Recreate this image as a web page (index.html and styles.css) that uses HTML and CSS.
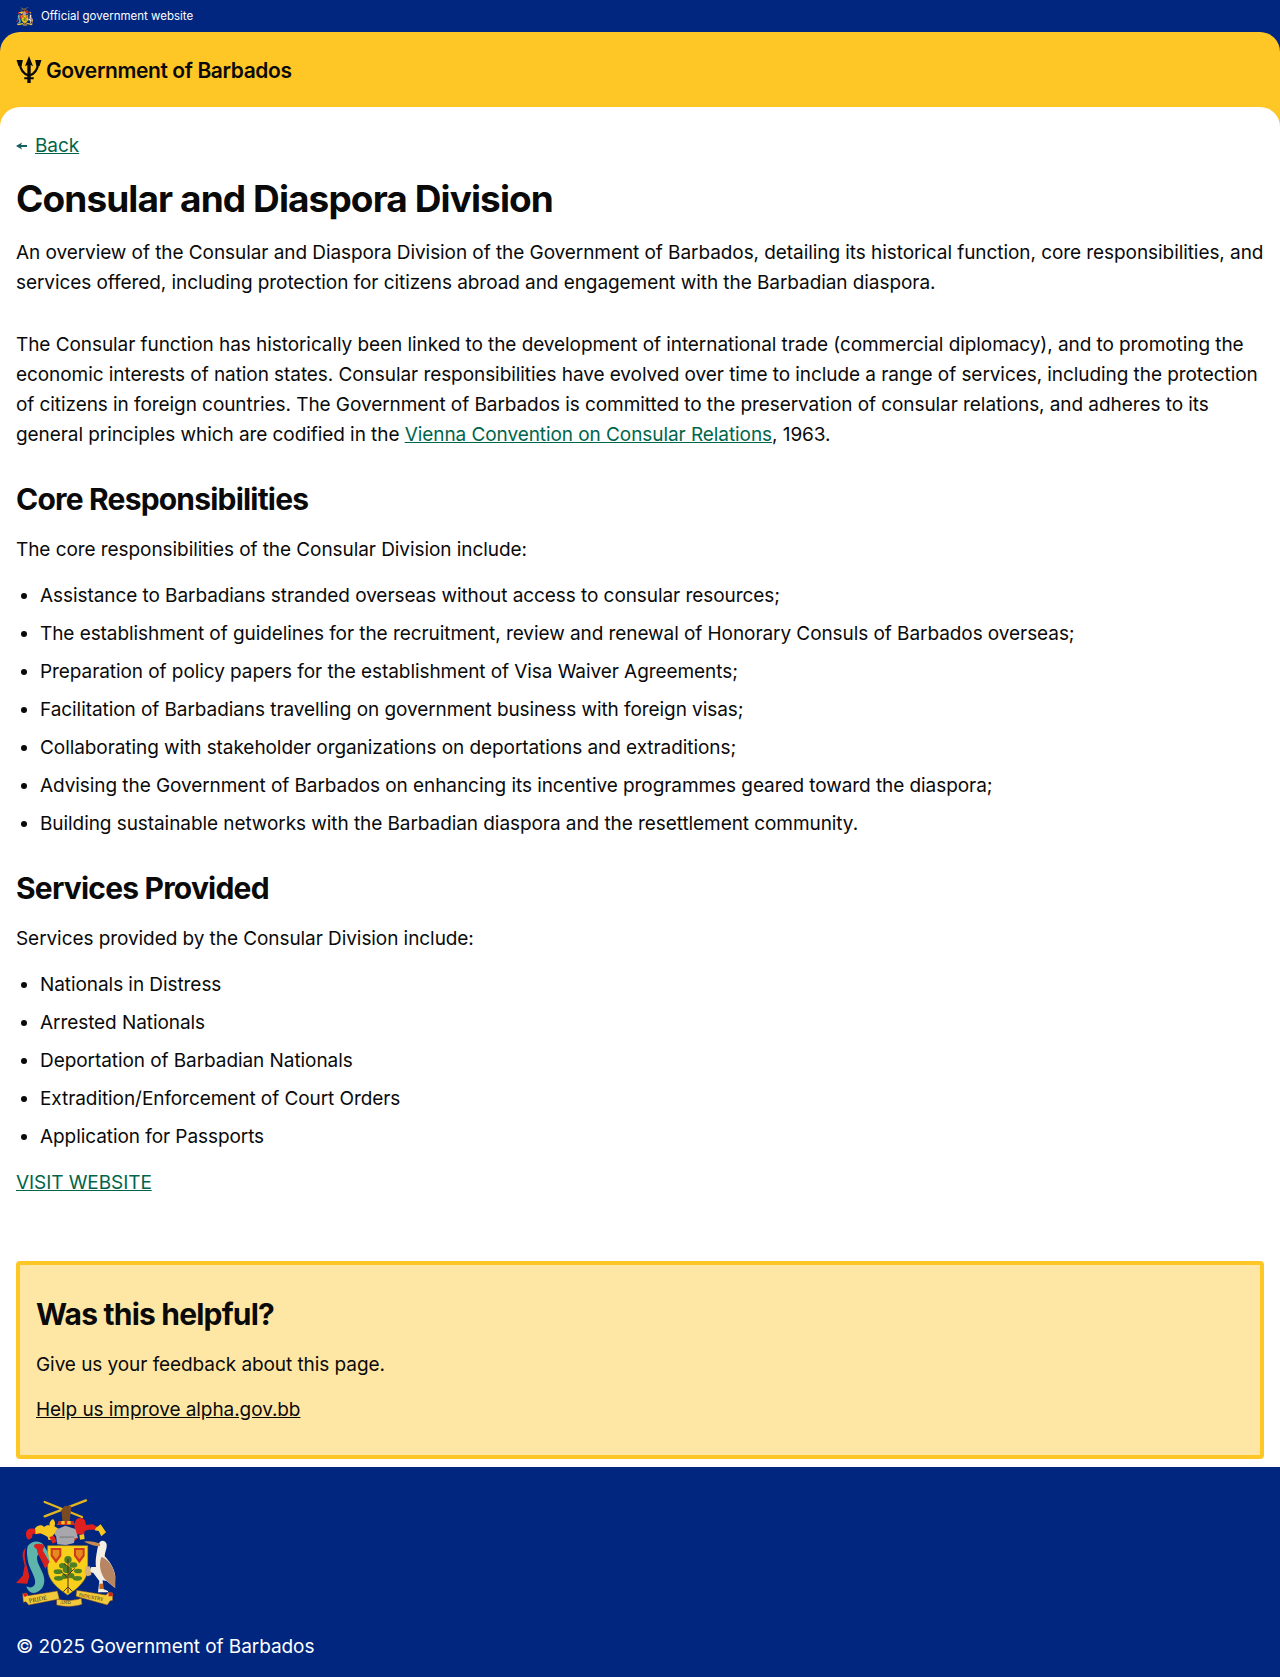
FILE: index.html
```html
<!DOCTYPE html>
<html lang="en">
<head>
<meta charset="utf-8">
<title>Consular and Diaspora Division</title>
<link rel="stylesheet" href="styles.css">
</head>
<body>
<svg class="defs" width="0" height="0" aria-hidden="true">
  <symbol id="arms" viewBox="50 55 300 330">
    <g fill="none" stroke="#e3b520" stroke-width="7" stroke-linecap="round">
      <path d="M136 67 L248 112"/><path d="M260 62 L136 110"/>
    </g>
    <path d="M186 92 L196 78 L216 80 L214 100 L210 132 L190 132Z" fill="#7a4a25"/>
    <path d="M178 124h44l6 12h-56Z" fill="#c8321e"/>
    <path d="M186 124h10v10h-10ZM204 124h10v10h-10Z" fill="#f0c41c"/>
    <!-- left mantling -->
    <path d="M80 162c0-12 12-18 28-14l20 6-6 10-22-2-2 12-10 6c-6-4-8-10-8-18Z" fill="#e0201f"/>
    <path d="M107 146c8-10 20-12 28-4 4-6 12-6 16-4-2-8 2-16 10-20 6 6 8 14 4 22l14 8-2 12-12 2-6 8c2 4 0 8-2 12l-10-2-2-8-10-6-14-6-12 4-2-18Z" fill="#f7c81e"/>
    <path d="M150 172l14-4 8 18-12 6Z" fill="#e0201f"/>
    <!-- right mantling -->
    <path d="M232 118c10-6 24-4 26 8l2 10 20-2 14 8-4 8-22 0-12 4-2 12-14-2-10 2-4-20c-2-10 2-24 6-28Z" fill="#e0201f"/>
    <path d="M216 168l12-6 8 14-12 8Z" fill="#e0201f"/>
    <path d="M290 144l14-10 16 24-14 12-8-16-12-2Z" fill="#f7c81e"/>
    <path d="M240 166l14-2 2 14-14 2Z" fill="#f7c81e"/>
    <!-- helmet -->
    <path d="M170 150l28-12 30 10 8 26-10 2-2 14-24 6-26-2-4-26-4-2Z" fill="#a8a8ac"/>
    <path d="M180 170l44 0 0 4-42 2Z" fill="#8a8a8f"/>
    <!-- shield -->
    <path d="M145 198h120v68c0 36-30 60-60 80-30-20-60-44-60-80Z" fill="#f8cf1a" stroke="#b8931a" stroke-width="1.500"/>
    <path d="M154 205h32v24l-16 22-16-22Z" fill="#cf3a1c"/>
    <path d="M224 205h32v24l-16 22-16-22Z" fill="#cf3a1c"/>
    <path d="M160 211h20v15l-10 13-10-13Z" fill="#e58a1c"/>
    <path d="M230 211h20v15l-10 13-10-13Z" fill="#e58a1c"/>
    <!-- tree -->
    <g fill="#4f7f24">
      <ellipse cx="206" cy="240" rx="11" ry="11"/>
      <ellipse cx="190" cy="258" rx="11" ry="8"/>
      <ellipse cx="222" cy="256" rx="12" ry="8"/>
      <ellipse cx="176" cy="276" rx="13" ry="7"/>
      <ellipse cx="236" cy="274" rx="12" ry="7"/>
      <ellipse cx="204" cy="270" rx="14" ry="10"/>
      <ellipse cx="178" cy="296" rx="14" ry="7"/>
      <ellipse cx="234" cy="296" rx="14" ry="7"/>
      <ellipse cx="196" cy="290" rx="9" ry="8"/>
      <ellipse cx="216" cy="288" rx="9" ry="8"/>
    </g>
    <g fill="none" stroke="#4e2f14" stroke-width="3">
      <path d="M206 238v86"/><path d="M206 296l-20-20M206 286l20-20M206 262l-12-10M206 322l-14 14M206 322l14 14M206 322v18"/>
    </g>
    <!-- dolphin -->
    <path d="M85 200c10-16 34-20 46-6l14 22 6 30-12 18-12-30c-6-12-14-12-14 2 2 24 22 42 22 66 0 20-12 36-32 38-12 0-18-8-22-20 10 6 22 4 26-8 4-16-14-40-20-62-4-20-6-36-2-50Z" fill="#5db5ab"/>
    <path d="M106 194c12-4 24-2 30 4l-6 14 6 10 14 24-12 22-12-26-10-18-4-16-8-6ZM80 204c-6 16-4 38 4 60l6 26-6 22-34-2 20-22 6-30-6-26c-2-12 4-24 10-28Z" fill="#d8201f"/>
    <!-- pelican -->
    <path d="M296 200c2-20 22-22 26-6 2 12-6 24-6 36 14 14 28 34 32 60l-2 34-24-20-12-2 2 26 14 6v4h-30l4-34-18-24-14-4 8-14 14 0c-2-16 0-34 6-62Z" fill="#f4efe3"/>
    <path d="M254 186c16-3 34 0 48 6l0 8c-16 0-32-6-48-14Z" fill="#c98a52"/>
    <path d="M306 232c22 6 42 36 42 68v26l-32-28c-14-20-18-44-10-66Z" fill="#b88562"/>
    <path d="M300 312h12v16h-12Z" fill="#c4661f"/>
    <path d="M258 262l14-2 4 26-12 4-8-10Z" fill="#d8b27a"/>
    <!-- motto ribbons -->
    <path d="M70 342l12-2 4 8 88-14 6 24-92 18-8-10-8 2Z" fill="#f1ca3c" stroke="#8a4a12" stroke-width="1.500"/>
    <path d="M70 342l12-2 2 8-8 4Z" fill="#d8201f"/>
    <path d="M172 358c24 6 50 6 74-2l2 18c-24 8-52 8-76 2Z" fill="#f1ca3c" stroke="#8a4a12" stroke-width="1.500"/>
    <path d="M232 332l88 14 8-8 12 2 0 22-8 2-8 12-94-26Z" fill="#f1ca3c" stroke="#8a4a12" stroke-width="1.500"/>
    <path d="M328 338l12 2 0 10-12 0Z" fill="#d8201f"/>
  </symbol>
</svg>

<div class="official">
  <svg class="official-arms" aria-hidden="true"><use href="#arms"/></svg>
  <span>Official government website</span>
</div>

<header class="brand">
  <svg class="trident" viewBox="48 168 76 80" aria-hidden="true">
    <path d="M58 186c2 22 12 36 28 40 16-4 26-18 28-40" fill="none" stroke="#0a0a0a" stroke-width="6.500"/>
    <path d="M86 168l12 30-7-3v53H81v-53l-7 3ZM49 180l19 0-4 18h-9ZM123 180l-19 0 4 18h9ZM72 231h28v6H72Z" fill="#0a0a0a"/>
  </svg>
  <span class="brand-name">Government of Barbados</span>
</header>

<main class="content">
  <a class="back" href="#"><svg class="back-arrow" viewBox="0 0 11 8" aria-hidden="true"><path d="M0 4l6-3.500-1 2.500h6v2H5l1 2.500Z" fill="#155e63"/></svg><span class="link">Back</span></a>
  <h1>Consular and Diaspora Division</h1>
  <p class="lead">An overview of the Consular and Diaspora Division of the Government of Barbados, detailing its historical function, core responsibilities, and services offered, including protection for citizens abroad and engagement with the Barbadian diaspora.</p>
  <p class="body">The Consular function has historically been linked to the development of international trade (commercial diplomacy), and to promoting the economic interests of nation states. Consular responsibilities have evolved over time to include a range of services, including the protection of citizens in foreign countries. The Government of Barbados is committed to the preservation of consular relations, and adheres to its general principles which are codified in the <a class="link" href="#">Vienna Convention on Consular Relations</a>, 1963.</p>
  <h2>Core Responsibilities</h2>
  <p class="intro">The core responsibilities of the Consular Division include:</p>
  <ul>
    <li>Assistance to Barbadians stranded overseas without access to consular resources;</li>
    <li>The establishment of guidelines for the recruitment, review and renewal of Honorary Consuls of Barbados overseas;</li>
    <li>Preparation of policy papers for the establishment of Visa Waiver Agreements;</li>
    <li>Facilitation of Barbadians travelling on government business with foreign visas;</li>
    <li>Collaborating with stakeholder organizations on deportations and extraditions;</li>
    <li>Advising the Government of Barbados on enhancing its incentive programmes geared toward the diaspora;</li>
    <li>Building sustainable networks with the Barbadian diaspora and the resettlement community.</li>
  </ul>
  <h2>Services Provided</h2>
  <p class="intro">Services provided by the Consular Division include:</p>
  <ul>
    <li>Nationals in Distress</li>
    <li>Arrested Nationals</li>
    <li>Deportation of Barbadian Nationals</li>
    <li>Extradition/Enforcement of Court Orders</li>
    <li>Application for Passports</li>
  </ul>
  <p class="visit"><a class="link" href="#">VISIT WEBSITE</a></p>
  <section class="feedback">
    <h2 class="feedback-title">Was this helpful?</h2>
    <p class="feedback-text">Give us your feedback about this page.</p>
    <p class="feedback-link"><a href="#">Help us improve alpha.gov.bb</a></p>
  </section>
</main>

<footer class="footer">
  <svg class="footer-arms" viewBox="50 55 300 330" role="img" aria-label="Coat of arms of Barbados">
    <use href="#arms" x="50" y="55" width="300" height="330"/>
    <text class="motto" transform="translate(90 370) rotate(-11)">PRIDE</text>
    <text class="motto motto-small" x="182" y="374">AND</text>
    <text class="motto motto-small" transform="translate(238 350) rotate(11)">INDUSTRY</text>
  </svg>
  <p class="copyright">© 2025 Government of Barbados</p>
</footer>
</body>
</html>
```
FILE: styles.css
```css
* { box-sizing: border-box; }
html, body { margin: 0; padding: 0; }
body {
  background: #00267f;
  color: #0a0a0a;
  font-family: "Inter", "Liberation Sans", sans-serif;
  font-size: 19px;
  line-height: 30px;
  letter-spacing: -0.07px;
}
.defs { position: absolute; }
.official {
  height: 32px;
  display: flex;
  align-items: center;
  gap: 8px;
  padding-left: 16px;
  color: #fff;
  font-size: 11.5px;
  letter-spacing: 0;
}
.official-arms { width: 17px; height: 19px; }
.brand {
  height: 95px;
  background: #ffc726;
  border-radius: 20px 20px 0 0;
  display: flex;
  align-items: flex-start;
  gap: 4px;
  padding: 24px 16px 0;
}
.trident { width: 26px; height: 27px; }
.brand-name { font-size: 21px; font-weight: 600; line-height: 30px; letter-spacing: -0.4px; }
.content {
  background: #fff;
  margin-top: -20px;
  border-radius: 20px 20px 0 0;
  padding: 24px 16px 8px;
  position: relative;
}
.link, .content a { color: #00654a; text-decoration: underline; }
.back { display: flex; align-items: center; gap: 8px; height: 30px; text-decoration: none; }
.back-arrow { width: 11px; height: 8px; }
h1 { margin: 14px 0 0; font-size: 37px; line-height: 48px; font-weight: 700; letter-spacing: -0.9px; }
h2 { margin: 30px 0 0; font-size: 30px; line-height: 38px; font-weight: 700; letter-spacing: -0.8px; }
p { margin: 0; }
.lead { margin-top: 15px; }
.body { margin-top: 32px; }
.intro { margin-top: 17px; }
ul { margin: 16px 0 0; padding: 0 0 0 24px; display: flex; flex-direction: column; gap: 8px; }
.visit { margin-top: 16px; }
.feedback {
  margin-top: 63px;
  height: 198px;
  background: #fee7a5;
  border: 4px solid #ffc726;
  border-radius: 4px;
  padding: 21px 16px 16px;
}
.feedback-title { margin: 9px 0 0; }
.feedback-text { margin-top: 17px; }
.feedback-link { margin-top: 15px; }
.content .feedback-link a { color: #0a0a0a; }
.footer { padding: 31px 16px 0; color: #fff; height: 210px; }
.footer-arms { display: block; width: 100px; height: 110px; }
.motto { font-family: "Liberation Serif", serif; font-size: 19px; fill: #3a2a10; letter-spacing: 0; }
.motto-small { font-size: 15px; }
.copyright { margin-top: 24px; }
```
